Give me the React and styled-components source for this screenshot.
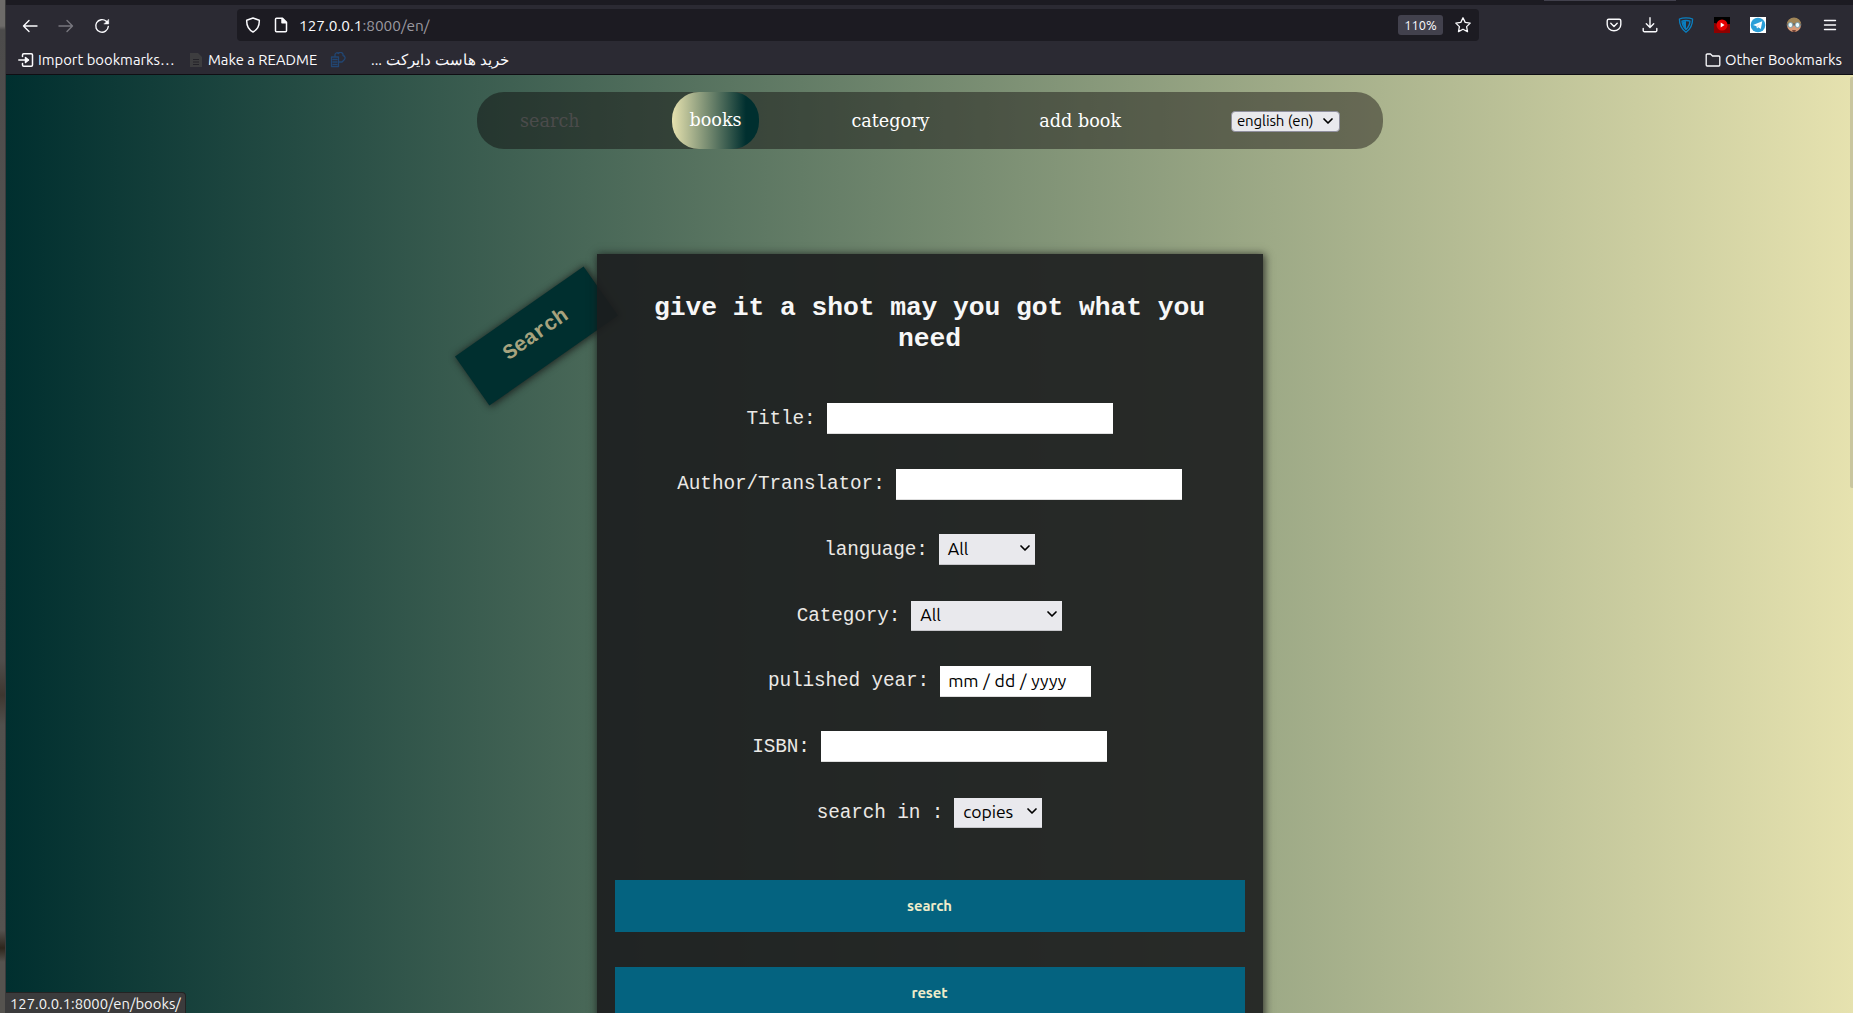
import React from "react";
import styled, { createGlobalStyle } from "styled-components";

const ui = `Ubuntu, "Noto Sans", sans-serif`;
const mono = `"Courier New", "Liberation Mono", monospace`;

const Global = createGlobalStyle`
  * { box-sizing: border-box; }
  html, body { margin: 0; height: 1013px; overflow: hidden; background: #4f4d4b; }
`;
const Screen = styled.div`
  display: flex; width: 1853px; height: 1013px; overflow: hidden;
`;
const Desktop = styled.div`
  width: 6px; flex: none; border-right: 1px solid #3b3b3c;
  background: linear-gradient(to bottom, #6d6b69 0, #6d6b69 26px, #4c4b4b 30px, #545250 300px, #504e4c 660px, #3e3730 695px, #51504d 725px, #555350 930px, #2e261c 948px, #55534f 962px);
`;
const Browser = styled.div`
  flex: 1; display: flex; flex-direction: column; min-width: 0;
`;
const TabStrip = styled.div`
  height: 5px; background: #1c1b22; padding-left: 1538px; flex: none;
`;
const ActiveTab = styled.div`
  width: 132px; height: 1px; background: #42414d;
`;
const Toolbar = styled.div`
  height: 41px; flex: none; background: #2b2a33; display: flex; align-items: center;
  padding: 0 15px 0 16px; color: #fbfbfe;
`;
const NavIcons = styled.div`
  display: flex; gap: 20px; width: 215px;
`;
const Address = styled.div`
  width: 1242px; height: 32px; margin-top: -1px; border-radius: 4px; background: #1c1b22;
  display: flex; align-items: center; padding: 0 8px 0 8px;
  font: 15.4px ${ui};
`;
const IconGap = styled.span`
  width: 12px;
`;
const Url = styled.span`
  margin-left: 10px; flex: 1; color: #9a99a0;
  b { font-weight: 400; color: #fbfbfe; }
`;
const ZoomBadge = styled.span`
  width: 45px; height: 20px; border-radius: 3px; background: #42414d; margin-right: 12px;
  font-size: 12.8px; line-height: 20px; text-align: center;
`;
const Extensions = styled.div`
  margin-left: auto; display: flex; gap: 20px; align-items: center; margin-top: -2px;
`;
const Bookmarks = styled.div`
  height: 29px; flex: none; background: #2b2a33; border-bottom: 1px solid #0f0e13;
  display: flex; align-items: center; padding: 0 11px 1px 12px;
  font: 14.8px ${ui}; color: #fbfbfe;
`;
const Bookmark = styled.span`
  display: flex; align-items: center; gap: ${p => p.$gap || 4}px; width: ${p => p.$w}px; white-space: nowrap;
  &:last-child { margin-left: auto; }
  bdi { font-size: 14.8px; word-spacing: 0.5px; }
`;
const Page = styled.main`
  position: relative; flex: 1; overflow: hidden; padding-top: 17px;
  background: linear-gradient(to right, #002f2f, #e6e2af);
  display: flex; flex-direction: column; align-items: center;
`;
const Nav = styled.nav`
  width: 906px; height: 57px; flex: none; border-radius: 27px; background: rgba(8, 0, 2, 0.41);
  display: flex; justify-content: space-between; align-items: stretch; padding: 0 25px 0 26px;
  font: 17.6px "DejaVu Serif", serif;
`;
const NavItem = styled.a`
  display: flex; align-items: center; padding: ${p => (p.$active ? "0 17.6px 1px" : "1px 17.6px 0")};
  color: ${p => (p.$muted ? "#4b4b4b" : "#fff")};
  border-radius: 27px;
  background: ${p => (p.$active ? "linear-gradient(to right, #e6e2af, #002f2f 85%)" : "none")};
`;
const SelectBox = styled.span`
  display: flex; align-items: center; justify-content: space-between;
  width: ${p => p.$w}px; height: ${p => p.$h || 31}px; padding: 0 4px 2px 9px;
  background: #e9e9ed; color: #000; font: 17.6px ${ui}; letter-spacing: -0.1px;
  border-bottom: 1px solid #c6c6ca;
`;
const LangSelect = styled(SelectBox)`
  border: 1px solid #8f8f9d; border-radius: 4px; font-size: 15px; padding: 0 5px 1px 5px; white-space: nowrap;
`;
const Card = styled.section`
  position: relative; margin-top: 105px; width: 666px; height: 800px; flex: none;
  background: rgba(28, 29, 30, 0.9); box-shadow: 1px 1px 8px 1px rgba(20, 20, 20, 0.75);
  padding: 39px 18px 0; display: flex; flex-direction: column; align-items: center;
`;
const Heading = styled.h2`
  margin: 0 0 48px; width: 600px; text-align: center; color: #f7f7f7;
  font: bold 26.4px/31px ${mono}; letter-spacing: -0.1px;
`;
const Field = styled.div`
  display: flex; align-items: center; gap: 11px; height: 31px; margin-bottom: 34.7px;
  font: 19.36px ${mono}; letter-spacing: -0.1px; color: #ebe9e6;
`;
const TextInput = styled.span`
  display: flex; align-items: center; width: ${p => p.$w || 286}px; height: 31px; background: #fff;
  border-bottom: 1px solid #dedede; color: #000; padding: 0 8px 1px; font: 17.6px ${ui}; letter-spacing: 0; word-spacing: 0.8px;
`;
const Actions = styled.div`
  margin-top: 17px; width: 630px; display: flex; flex-direction: column; gap: 35px;
`;
const Action = styled.button`
  height: 52px; border: 0; background: #046380; color: #efecca; font: bold 14.8px ${ui}; letter-spacing: -0.1px; padding: 0;
`;
const Ribbon = styled.div`
  position: absolute; left: 452px; top: 231px; width: 157px; height: 60px; transform: rotate(-35deg);
  background: #002f2f; box-shadow: 1px 1px 7px 1px rgba(20, 20, 20, 0.75); color: #a7a37e; padding: 0 0 4px;
  display: flex; align-items: center; justify-content: center; font: bold 21.12px ${mono}; letter-spacing: -0.4px;
`;
const StatusBar = styled.div`
  position: absolute; left: 0; bottom: 0; width: 180px; height: 21px; padding-left: 4px;
  background: #3b3b3c; border: solid #232323; border-width: 1px 1px 0 0; border-radius: 0 4px 0 0;
  font: 14.8px/21px ${ui}; color: #f4f4f4; white-space: nowrap;
`;
const ScrollThumb = styled.div`
  position: absolute; right: 0; top: 2px; width: 3px; height: 411px; border-radius: 2px 0 0 2px; background: #c9c69f;
`;
const Glyph = styled.svg`
  flex: none; fill: none; stroke-linecap: round; stroke-linejoin: round;
`;

const Icon = ({ children, size = 16, color = "#fbfbfe", w = 1.4 }) => (
  <Glyph width={size} height={size} viewBox="0 0 16 16" stroke={color} strokeWidth={w}>
    {children}
  </Glyph>
);
const Chevron = () => (
  <Glyph width="12" height="10" viewBox="0 0 12 10" stroke="#000" strokeWidth="1.7"><path d="M2 3l4 4 4-4" /></Glyph>
);

export default function App() {
  return (
    <Screen>
      <Global />
      <Desktop />
      <Browser>
        <TabStrip><ActiveTab /></TabStrip>
        <Toolbar>
          <NavIcons>
            <Icon><path d="M15 8H1.5M7 2.5L1.5 8L7 13.5" /></Icon>
            <Icon color="#78777f"><path d="M1 8h13.5M9 2.5L14.5 8L9 13.5" /></Icon>
            <Icon><path d="M14.3 8.5a6.3 6.3 0 1 1-2-5.2l1.5 1.4" /><path d="M14.7 1.5v4.500h-4.500z" fill="#fbfbfe" strokeWidth=".5" /></Icon>
          </NavIcons>
          <Address>
            <Icon w="1.5"><path d="M8 1L14.300 3.300C14.500 9 12.500 12.500 8 15C3.500 12.500 1.500 9 1.700 3.300Z" /></Icon>
            <IconGap />
            <Icon w="1.5"><path d="M3.500 1.300h6l4 4v8.400a1 1 0 0 1-1 1h-9a1 1 0 0 1-1-1V2.300a1 1 0 0 1 1-1z" /><path d="M9 1.500v4.300h4.300z" fill="#fbfbfe" /></Icon>
            <Url><b>127.0.0.1</b>:8000/en/</Url>
            <ZoomBadge>110%</ZoomBadge>
            <Icon w="1.3"><path d="M8 .8l2.200 4.600 5 .7-3.600 3.500.9 5L8 12.200l-4.500 2.400.9-5L.8 6.100l5-.7z" /></Icon>
          </Address>
          <Extensions>
            <Icon><path d="M2.700 2.300h10.600a1.500 1.500 0 0 1 1.500 1.500V7.500a6.800 6.300 0 0 1-13.600 0V3.800a1.500 1.500 0 0 1 1.500-1.500zM4.800 6.300L8 9.400l3.200-3.100" /></Icon>
            <Icon><path d="M8 .8v9.500M4.300 6.800L8 10.400l3.700-3.600M1.200 11.500v2a1.200 1.200 0 0 0 1.200 1.200h11.200a1.200 1.200 0 0 0 1.200-1.200v-2" /></Icon>
            <Icon color="#0a7fc0" w="1.3"><path d="M8 .8c2 0 4.500.2 6.600 1.200C14.600 8 12 12.500 8 15.300C4 12.500 1.400 8 1.400 2C3.500 1 6 .8 8 .8z" /><path d="M8 3.500c1.500 0 2.800.1 4 .6C11.700 8 10.200 10.500 8 12.500C5.800 10.500 4.300 8 4 4.100c1.200-.5 2.500-.6 4-.6z" /><path d="M8 4v8C6 10 5 8 4.600 4.500z" fill="#0a7fc0" stroke="none" /></Icon>
            <Icon w="0"><path d="M0 0h16v7l-8 1-8-2z" fill="#000" /><path d="M0 6l8 2 8-1v9H0z" fill="#8e0000" /><circle cx="8" cy="8" r="5.500" fill="#e60000" /><path d="M6.700 5.600v4.800L10.500 8z" fill="#fff" /></Icon>
            <Icon w="0"><path d="M0 0h16v16H0z" fill="#fff" /><circle cx="8" cy="8" r="7.300" fill="#2a9fd8" /><path d="M3 8l9.300-3.800L10.800 12 8.300 10.200 7 11.500 6.600 9.200z" fill="#fff" /><path d="M6.600 9.200l3.800-3-3 3.600L7 11.500z" fill="#c5dff0" /></Icon>
            <Icon w="0"><circle cx="8" cy="8" r="7" fill="#d99a76" /><path d="M1 7a7 6.500 0 0 1 14 0z" fill="#a08658" /><path d="M.5 6.500h15v2H.5z" fill="#665b50" /><circle cx="4.500" cy="8" r="2.500" fill="#e8fbff" stroke="#7d98a0" strokeWidth="1" /><circle cx="11.500" cy="8" r="2.500" fill="#e8fbff" stroke="#7d98a0" strokeWidth="1" /><path d="M6 13h4l-1 2H7z" fill="#754437" /></Icon>
            <Icon><path d="M2.500 3.500h11M2.500 8h11M2.500 12.500h11" /></Icon>
          </Extensions>
        </Toolbar>
        <Bookmarks>
          <Bookmark $w="170"><Icon w="1.500"><path d="M4.500 4.500V3a1.200 1.200 0 0 1 1.200-1.200h7.600A1.200 1.200 0 0 1 14.500 3v10a1.200 1.200 0 0 1-1.200 1.200H5.700A1.200 1.200 0 0 1 4.500 13v-1.500M.8 8h9.500" /><path d="M7.500 5.500L10.500 8l-3 2.500z" fill="#fbfbfe" /></Icon>Import bookmarks…</Bookmark>
          <Bookmark $w="142" $gap="4"><Icon w="0"><path d="M2 1h8l4 4v10H2z" fill="#3d3d3f" /><path d="M5 7h6v1H5zM5 9.500h6v1H5zM5 12h6v1H5z" fill="#242329" /></Icon>Make a README</Bookmark>
          <Bookmark $w="190" $gap="25"><Icon color="#214673" w="1.300"><path d="M1.500 5h7v9.500h-7zM3 7.500h4M3 10h4M3 12.300h4M5 5V3a2 2 0 0 1 3.500-1.500A2.500 2.500 0 0 1 13 3.500a2.500 2.500 0 0 1 1 4.500l-2 2h-3" /></Icon><bdi dir="rtl">خرید هاست دایرکت ...</bdi></Bookmark>
          <Bookmark $gap="4"><Icon w="1.300"><path d="M1.200 13V3a1 1 0 0 1 1-1h3.300l2 2h6.300a1 1 0 0 1 1 1v8a1 1 0 0 1-1 1H2.200a1 1 0 0 1-1-1z" /></Icon>Other Bookmarks</Bookmark>
        </Bookmarks>
        <Page>
          <Nav>
            <NavItem $muted>search</NavItem>
            <NavItem $active>books</NavItem>
            <NavItem>category</NavItem>
            <NavItem>add book</NavItem>
            <NavItem as="div"><LangSelect $w="109" $h="21">english (en)<Chevron /></LangSelect></NavItem>
          </Nav>
          <Ribbon>Search</Ribbon>
          <Card>
            <Heading>give it a shot may you got what you need</Heading>
            <Field>Title:<TextInput /></Field>
            <Field>Author/Translator:<TextInput /></Field>
            <Field>language:<SelectBox $w="96">All<Chevron /></SelectBox></Field>
            <Field>Category:<SelectBox $w="151" $h="30">All<Chevron /></SelectBox></Field>
            <Field>pulished year:<TextInput $w="151">mm / dd / yyyy</TextInput></Field>
            <Field>ISBN:<TextInput /></Field>
            <Field>search in :<SelectBox $w="88" $h="30">copies<Chevron /></SelectBox></Field>
            <Actions>
              <Action>search</Action>
              <Action>reset</Action>
            </Actions>
          </Card>
          <ScrollThumb />
          <StatusBar>127.0.0.1:8000/en/books/</StatusBar>
        </Page>
      </Browser>
    </Screen>
  );
}
